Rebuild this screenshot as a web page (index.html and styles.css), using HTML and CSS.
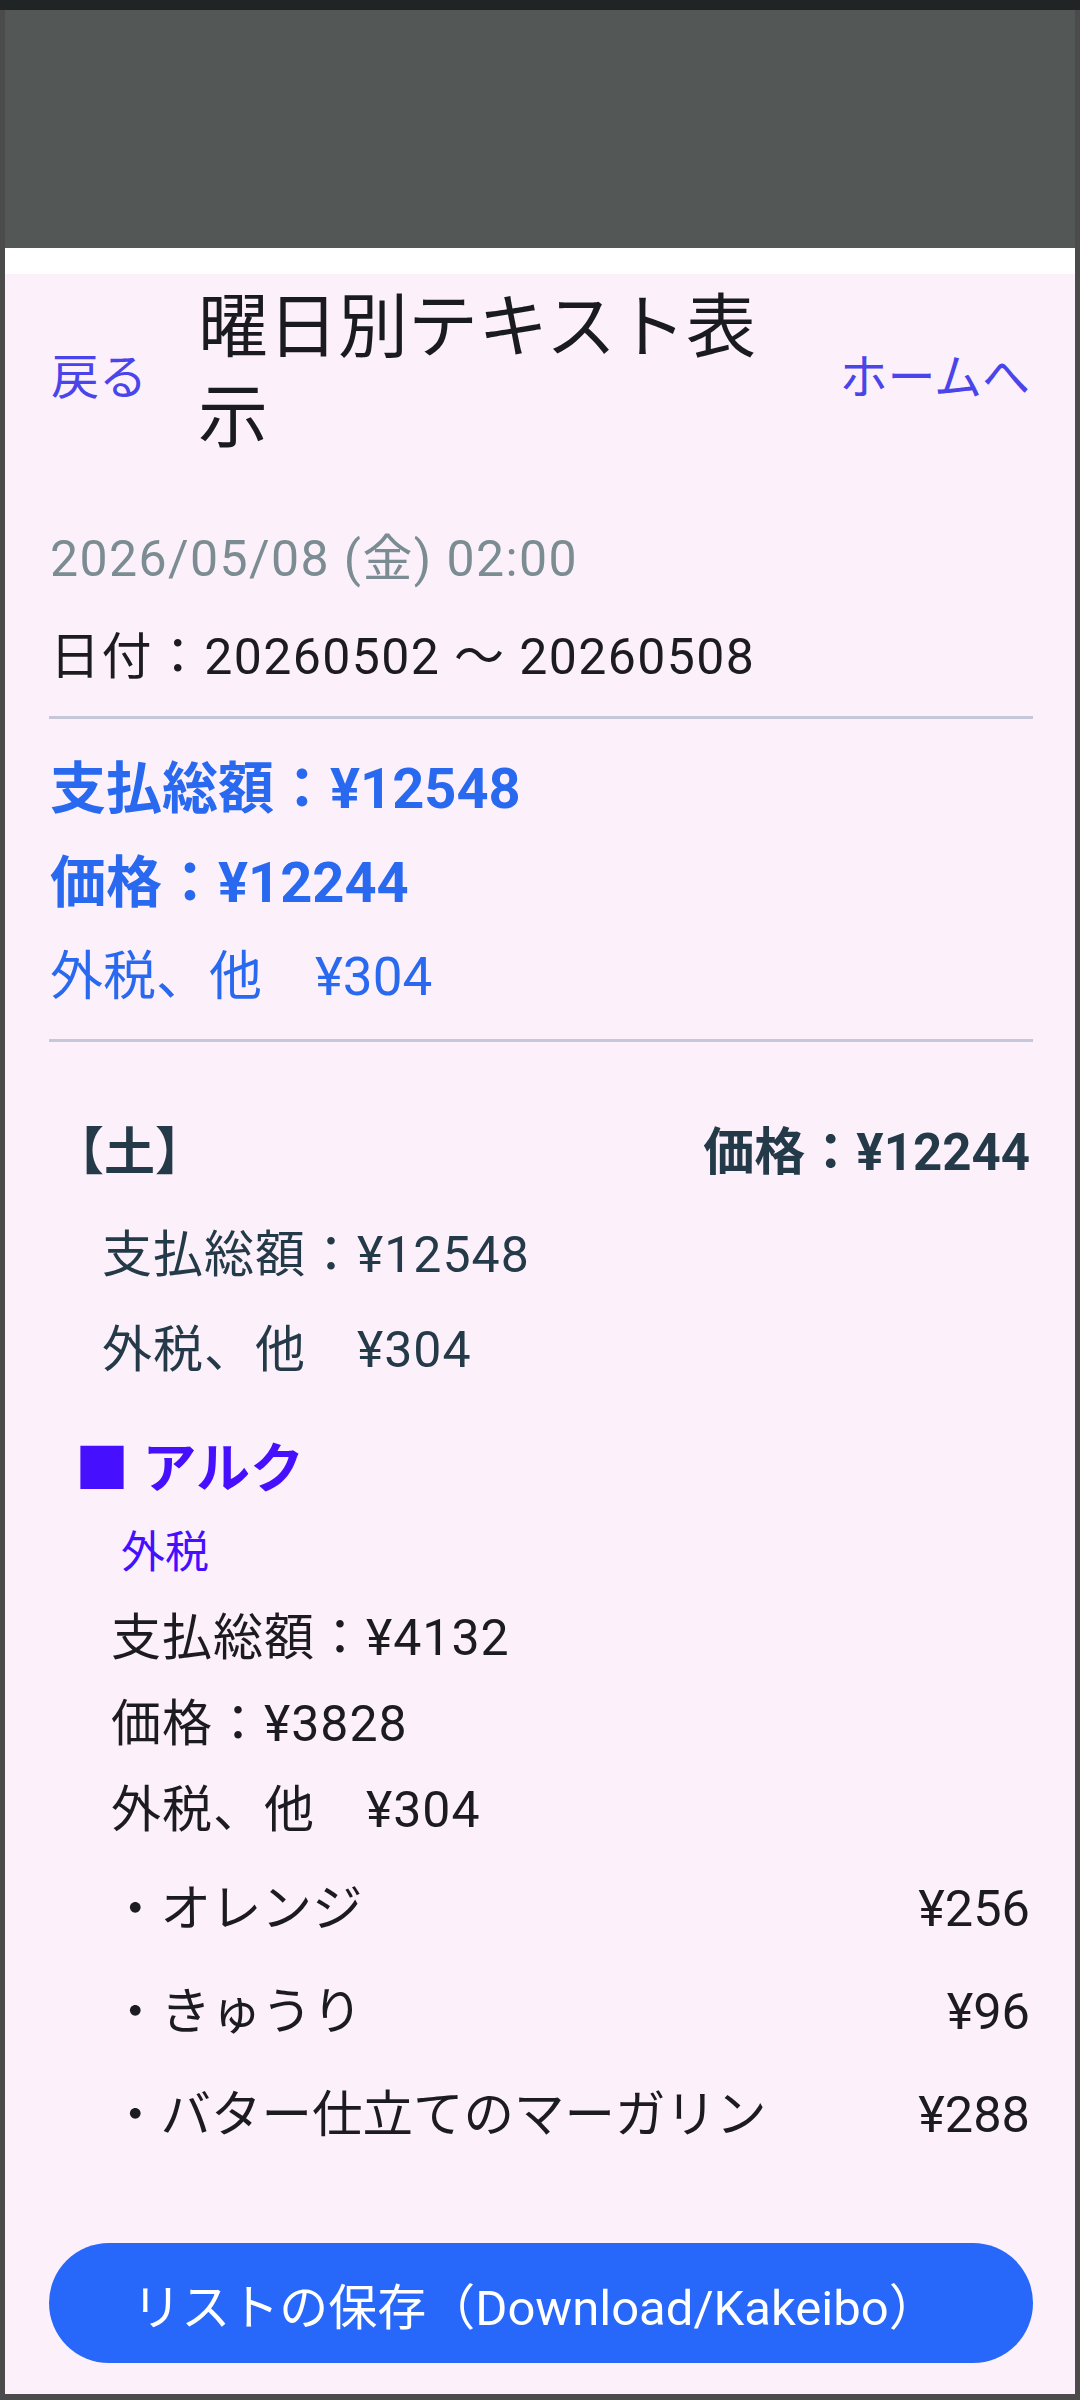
FILE: index.html
```html
<!DOCTYPE html>
<html lang="ja">
  <head>
    <meta charset="utf-8">
    <title>曜日別テキスト表示</title>
    <link rel="stylesheet" href="styles.css">
  </head>
  <body>
    <div class="edge-top"></div>
    <div class="device">
      <div class="status"></div>
      <div class="status-gap"></div>

      <div class="page">
        <div class="header">
          <a class="nav-link back">戻る</a>
          <h1 class="title">曜日別テキスト表示</h1>
          <a class="nav-link home">ホームへ</a>
        </div>

        <div class="meta">
          <p class="stamp">2026/05/08 (金) 02:00</p>
          <p class="range">日付：20260502 ～ 20260508</p>
        </div>

        <hr class="divider first">

        <div class="totals">
          <p class="total strong">支払総額：¥12548</p>
          <p class="total strong">価格：¥12244</p>
          <p class="total">外税、他　¥304</p>
        </div>

        <hr class="divider second">

        <div class="day">
          <div class="day-head">
            <span>【土】</span>
            <span>価格：¥12244</span>
          </div>
          <p class="day-line">支払総額：¥12548</p>
          <p class="day-line">外税、他　¥304</p>
        </div>

        <div class="shop">
          <h2 class="shop-name">■ アルク</h2>
          <p class="shop-tax">外税</p>
          <div class="shop-sums">
            <p>支払総額：¥4132</p>
            <p>価格：¥3828</p>
            <p>外税、他　¥304</p>
          </div>
          <ul class="items">
            <li><span>・オレンジ</span><span>¥256</span></li>
            <li><span>・きゅうり</span><span>¥96</span></li>
            <li><span>・バター仕立てのマーガリン</span><span>¥288</span></li>
          </ul>
        </div>

        <button class="save">リストの保存（Download/Kakeibo）</button>
      </div>
    </div>
  </body>
</html>
```

FILE: styles.css
```css
  body {
    margin: 0;
    height: 2400px;
    background: #4b4b4b;
    font-family: Roboto, "Noto Sans CJK JP", sans-serif;
    color: #1c1b1f;
    overflow: hidden;
  }

  p, h1, h2, ul {
    margin: 0;
    padding: 0;
  }

  .edge-top {
    height: 10px;
    background: #202424;
  }

  .device {
    margin: 0 5px;
  }

  .status {
    height: 238px;
    background: #535756;
  }

  .status-gap {
    height: 26px;
    background: #ffffff;
  }

  .page {
    height: 2120px;
    background: #fcf0fb;
    padding: 0 42px 0 44px;
    box-sizing: border-box;
    display: flex;
    flex-direction: column;
  }

  /* top row */

  .header {
    display: flex;
    align-items: center;
    padding-top: 9px;
  }

  .nav-link {
    font-size: 48px;
    color: #4a45ea;
    white-space: nowrap;
  }

  .back {
    padding-left: 2px;
  }

  .home {
    padding-right: 3px;
  }

  .title {
    flex: 1;
    margin: 0 57px 0 51px;
    font-size: 70px;
    font-weight: 400;
    line-height: 90px;
    color: #1a1b20;
  }

  /* date block */

  .meta {
    margin-top: 47px;
    padding-left: 1px;
    font-size: 50px;
    line-height: 98px;
    letter-spacing: 1.4px;
  }

  .stamp {
    color: #7b8d92;
  }

  .range {
    color: #1c1b1f;
  }

  .divider {
    border: 0;
    height: 3px;
    background: #c6c8da;
    margin: 0;
  }

  .divider.first {
    margin-top: 10px;
  }

  .divider.second {
    margin-top: 15px;
  }

  .totals {
    margin-top: 23px;
    padding-left: 1px;
    color: #2969f0;
    font-size: 53px;
    line-height: 94px;
  }

  .total.strong {
    font-size: 56px;
    font-weight: 700;
  }

  /* day card */

  .day {
    color: #243a48;
  }

  .day-head {
    display: flex;
    justify-content: space-between;
    margin-top: 66px;
    padding: 0 3px 0 4px;
    font-size: 51px;
    font-weight: 700;
    line-height: 90px;
  }

  .day-line {
    padding-left: 53px;
    font-size: 50px;
    line-height: 95px;
    letter-spacing: 1px;
  }

  .day-line:first-of-type {
    margin-top: 10px;
  }

  /* shop */

  .shop-name {
    margin-top: 32px;
    padding-left: 26px;
    font-size: 54px;
    font-weight: 700;
    line-height: 80px;
    color: #4610ff;
  }

  .shop-tax {
    margin-top: 13px;
    padding-left: 72px;
    font-size: 44px;
    line-height: 60px;
    color: #4610ff;
  }

  .shop-sums {
    margin-top: 12px;
    padding-left: 62px;
    font-size: 50px;
    line-height: 86px;
    letter-spacing: 1px;
  }

  .items {
    list-style: none;
    margin-top: 4px;
    padding: 0 3px 0 61px;
    font-size: 50.5px;
    line-height: 103px;
  }

  .items li {
    display: flex;
    justify-content: space-between;
  }

  /* button */

  .save {
    margin-top: 77px;
    height: 120px;
    border: 0;
    border-radius: 60px;
    background: #2768fb;
    color: #ffffff;
    font-family: Roboto, "Noto Sans CJK JP", sans-serif;
    font-size: 49px;
    font-weight: 400;
    padding: 0 12px 0 0;
  }
```
